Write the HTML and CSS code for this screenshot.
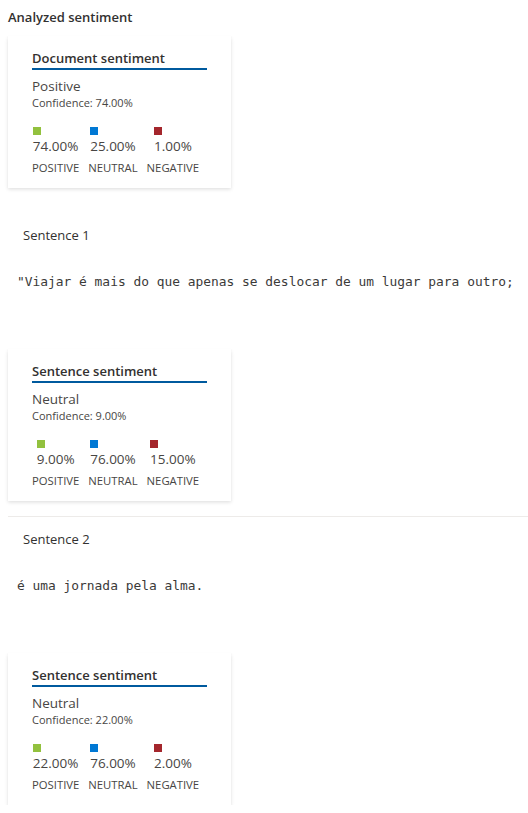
FILE: index.html
```html
<!DOCTYPE html>
<html>
<head>
<meta charset="utf-8">
<link rel="stylesheet" href="styles.css">
</head>
<body>
<div class="page">
  <div class="heading">Analyzed sentiment</div>

  <div class="card">
    <div class="card-title">Document sentiment</div>
    <div class="sentiment">Positive</div>
    <div class="confidence">Confidence: 74.00%</div>
    <div class="scores">
      <div class="score"><div class="score-inner"><span class="swatch pos"></span><div class="pct">74.00%</div></div><div class="score-label">POSITIVE</div></div>
      <div class="score"><div class="score-inner"><span class="swatch neu"></span><div class="pct">25.00%</div></div><div class="score-label">NEUTRAL</div></div>
      <div class="score"><div class="score-inner"><span class="swatch neg"></span><div class="pct">1.00%</div></div><div class="score-label">NEGATIVE</div></div>
    </div>
  </div>

  <div class="sentence first">
    <div class="sentence-label">Sentence 1</div>
    <div class="sentence-text">"Viajar é mais do que apenas se deslocar de um lugar para outro;</div>
    <div class="card">
      <div class="card-title">Sentence sentiment</div>
      <div class="sentiment">Neutral</div>
      <div class="confidence">Confidence: 9.00%</div>
      <div class="scores">
        <div class="score"><div class="score-inner"><span class="swatch pos"></span><div class="pct">9.00%</div></div><div class="score-label">POSITIVE</div></div>
        <div class="score"><div class="score-inner"><span class="swatch neu"></span><div class="pct">76.00%</div></div><div class="score-label">NEUTRAL</div></div>
        <div class="score"><div class="score-inner"><span class="swatch neg"></span><div class="pct">15.00%</div></div><div class="score-label">NEGATIVE</div></div>
      </div>
    </div>
  </div>

  <div class="sentence divided">
    <div class="sentence-label">Sentence 2</div>
    <div class="sentence-text">é uma jornada pela alma.</div>
    <div class="card">
      <div class="card-title">Sentence sentiment</div>
      <div class="sentiment">Neutral</div>
      <div class="confidence">Confidence: 22.00%</div>
      <div class="scores">
        <div class="score"><div class="score-inner"><span class="swatch pos"></span><div class="pct">22.00%</div></div><div class="score-label">POSITIVE</div></div>
        <div class="score"><div class="score-inner"><span class="swatch neu"></span><div class="pct">76.00%</div></div><div class="score-label">NEUTRAL</div></div>
        <div class="score"><div class="score-inner"><span class="swatch neg"></span><div class="pct">2.00%</div></div><div class="score-label">NEGATIVE</div></div>
      </div>
    </div>
  </div>
</div>
</body>
</html>
```

FILE: styles.css
```css
html, body {
  margin: 0;
  padding: 0;
  background: #ffffff;
}
body {
  font-family: "Segoe UI", "Open Sans", "Noto Sans", sans-serif;
  color: #323130;
}
.page {
  padding-left: 8px;
}
.heading {
  font-size: 13px;
  line-height: 18px;
  font-weight: 600;
  margin: 8px 0 10px;
  color: #323130;
}
.card {
  width: 223px;
  box-sizing: border-box;
  padding: 13px 24px 12px;
  background: #fff;
  box-shadow: 0 1.6px 3.6px rgba(0,0,0,0.13), 0 0.3px 0.9px rgba(0,0,0,0.11);
}
.card-title {
  font-size: 13px;
  line-height: 19px;
  font-weight: 600;
  color: #323130;
  border-bottom: 2px solid #005a9e;
}
.sentiment {
  margin-top: 7px;
  font-size: 13.5px;
  line-height: 18px;
  color: #484644;
}
.confidence {
  font-size: 11px;
  line-height: 16px;
  color: #484644;
}
.scores {
  display: flex;
  gap: 9px;
  margin-top: 16px;
}
.score {
  display: flex;
  flex-direction: column;
  align-items: center;
}
.score-inner {
  display: flex;
  flex-direction: column;
  align-items: flex-start;
}
.swatch {
  display: block;
  width: 8px;
  height: 8px;
}
.swatch.pos { background: #92c13e; }
.swatch.neu { background: #0078d4; }
.swatch.neg { background: #a4262c; }
.pct {
  margin-top: 1px;
  font-size: 13.5px;
  line-height: 20px;
  color: #484644;
}
.score-label {
  margin-top: 4px;
  font-size: 11.3px;
  line-height: 16px;
  color: #484644;
}
.sentence.first {
  margin-top: 38px;
}
.sentence.divided {
  margin-top: 15px;
  border-top: 1px solid #edebe9;
  padding-top: 13px;
}
.sentence-label {
  padding-left: 15px;
  font-size: 13px;
  line-height: 18px;
  color: #323130;
}
.sentence-text {
  margin-top: 29px;
  padding-left: 9px;
  font-family: "DejaVu Sans Mono", "Liberation Mono", monospace;
  font-size: 12.9px;
  line-height: 18px;
  color: #3b3a39;
  white-space: pre;
  margin-bottom: 58px;
}
```
